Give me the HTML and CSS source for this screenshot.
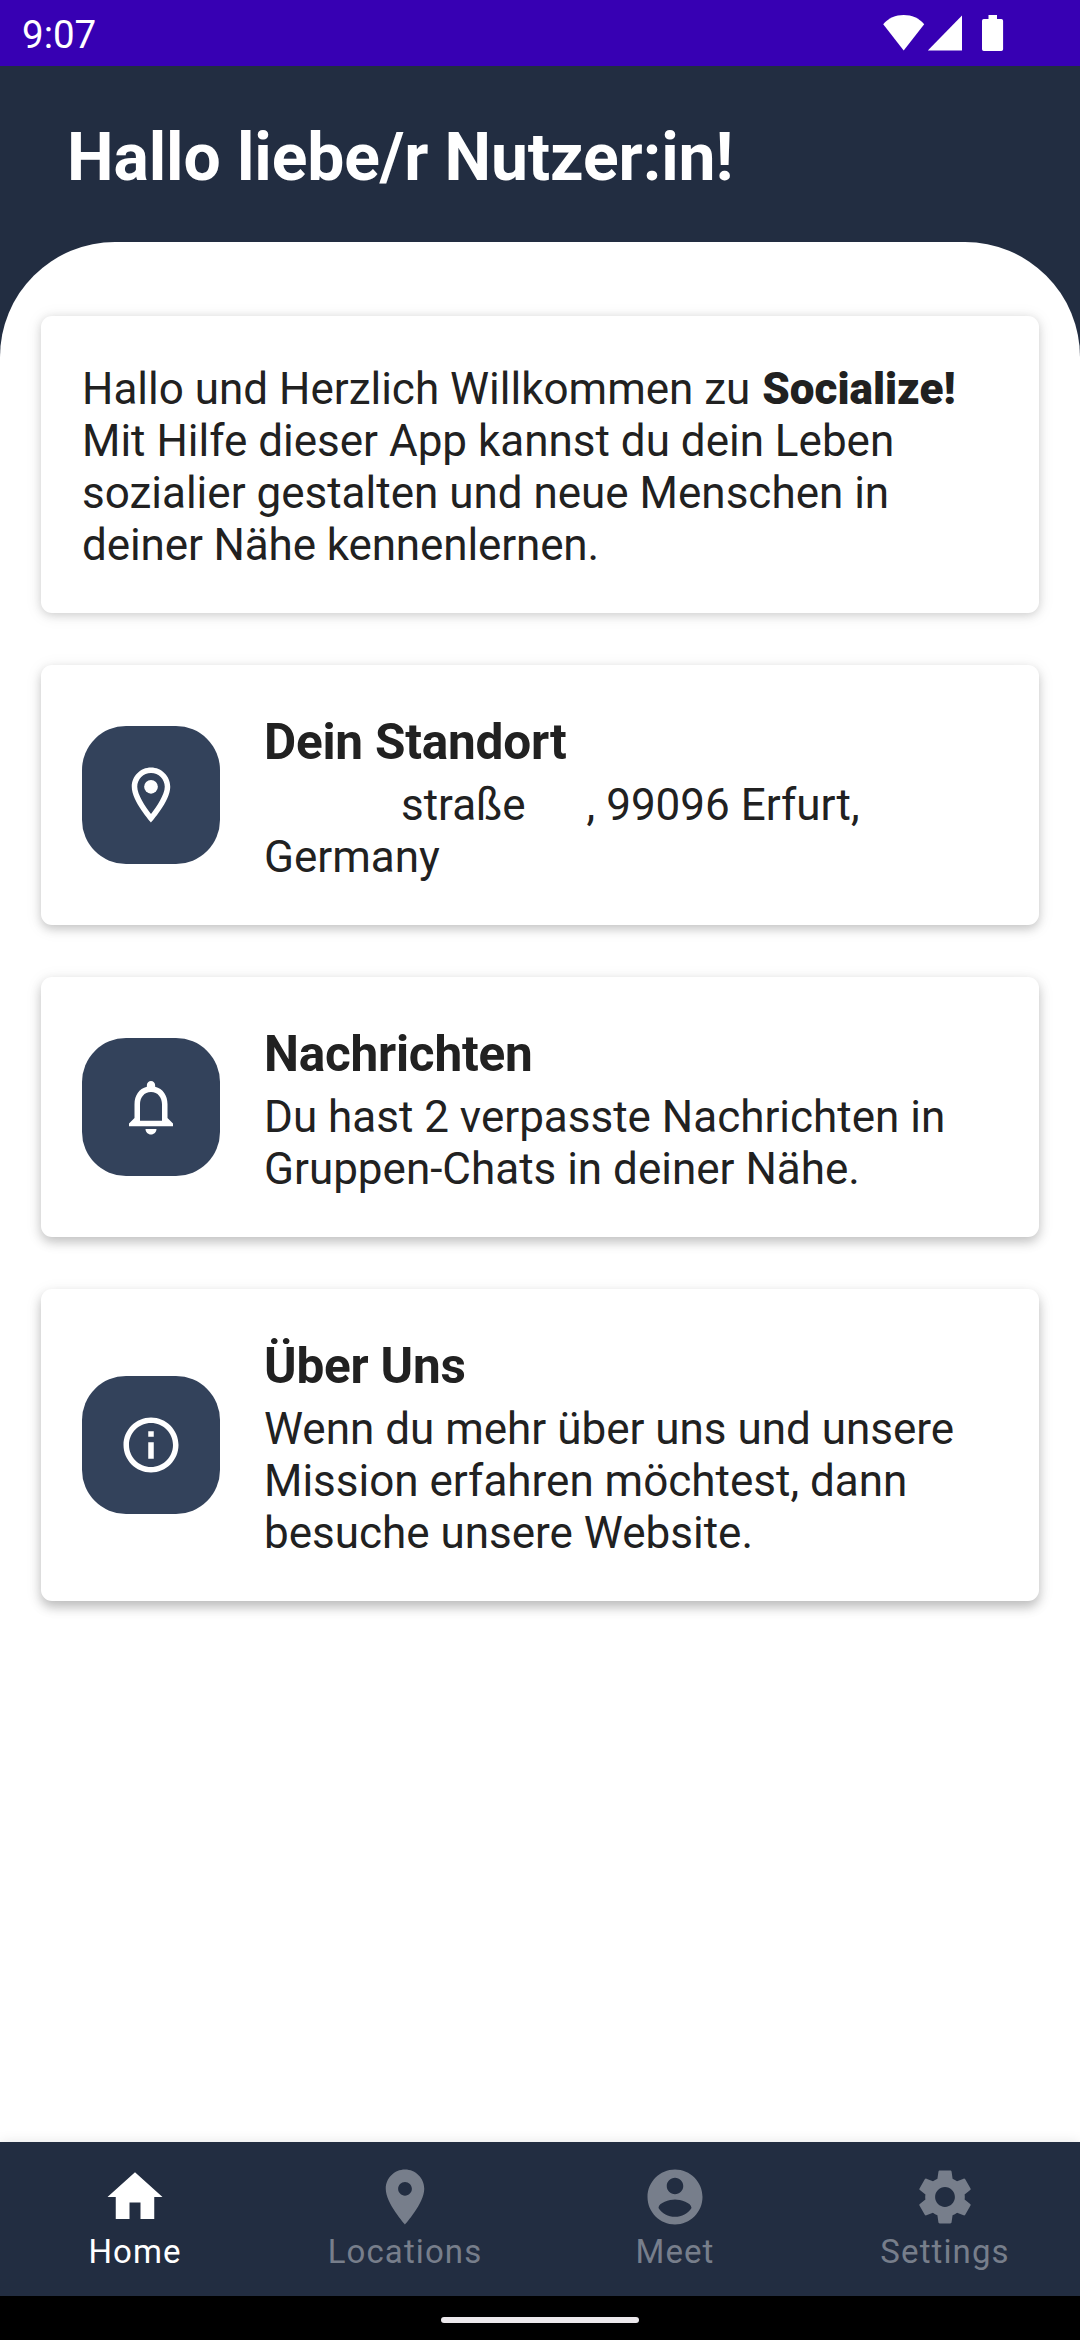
FILE: index.html
```html
<!DOCTYPE html>
<html lang="de">
<head>
<meta charset="utf-8">
<title>Socialize</title>
<link rel="stylesheet" href="styles.css">
</head>
<body>
<div class="app">
  <div class="status">
    <span class="time">9:07</span>
    <svg class="status-icons" width="122" height="38" viewBox="0 0 122 38" fill="#fff">
      <path d="M0.2 10.3C5.500 4 12.500 1 20.700 1S35.900 4 41.200 10.300L20.700 36.500z"/>
      <path d="M79 1.500V36.500H44.800z"/>
      <path d="M105.500 1h8.500v4h4.300a1.800 1.800 0 0 1 1.800 1.800v28.400a1.800 1.800 0 0 1-1.800 1.800h-17.500a1.800 1.800 0 0 1-1.800-1.800V6.800a1.800 1.800 0 0 1 1.800-1.800h4.700z"/>
    </svg>
  </div>
  <header class="header"><h1>Hallo liebe/r Nutzer:in!</h1></header>
  <main class="content">
    <section class="card card-intro">
      <p>Hallo und Herzlich Willkommen zu <b>Socialize!</b><br>Mit Hilfe dieser App kannst du dein Leben<br>sozialier gestalten und neue Menschen in<br><span class="last-line">deiner Nähe kennenlernen.</span></p>
    </section>
    <section class="card card-location">
      <div class="tile"><svg viewBox="0 0 24 24"><path d="M12 2C8.130 2 5 5.130 5 9c0 5.250 7 13 7 13s7-7.750 7-13c0-3.870-3.130-7-7-7zM7 9c0-2.760 2.240-5 5-5s5 2.240 5 5c0 2.880-2.880 7.190-5 9.880C9.920 16.210 7 11.850 7 9z"/><circle cx="12" cy="9" r="2.5"/></svg></div>
      <div class="text">
        <h2>Dein Standort</h2>
        <p><span class="gap-street"></span>straße<span class="gap-number"></span>, 99096 Erfurt,<br>Germany</p>
      </div>
    </section>
    <section class="card card-messages">
      <div class="tile"><svg viewBox="0 0 24 24"><path d="M12 22c1.100 0 2-.9 2-2h-4c0 1.100.9 2 2 2zm6-6v-5c0-3.070-1.630-5.640-4.500-6.320V4c0-.83-.67-1.500-1.500-1.500s-1.500.67-1.500 1.500v.68C7.640 5.360 6 7.920 6 11v5l-2 2v1h16v-1l-2-2zm-2 1H8v-6c0-2.480 1.510-4.500 4-4.500s4 2.020 4 4.500v6z"/></svg></div>
      <div class="text">
        <h2>Nachrichten</h2>
        <p>Du hast 2 verpasste Nachrichten in<br>Gruppen-Chats in deiner Nähe.</p>
      </div>
    </section>
    <section class="card card-about">
      <div class="tile"><svg viewBox="0 0 24 24"><path d="M11 7h2v2h-2zm0 4h2v6h-2zm1-9C6.480 2 2 6.480 2 12s4.480 10 10 10 10-4.480 10-10S17.520 2 12 2zm0 18c-4.410 0-8-3.590-8-8s3.590-8 8-8 8 3.590 8 8-3.590 8-8 8z"/></svg></div>
      <div class="text">
        <h2>Über Uns</h2>
        <p>Wenn du mehr über uns und unsere<br>Mission erfahren möchtest, dann<br>besuche unsere Website.</p>
      </div>
    </section>
  </main>
  <nav class="nav">
    <a class="nav-item active"><svg viewBox="0 0 24 24"><path d="M10 20v-6h4v6h5v-8h3L12 3 2 12h3v8z"/></svg><span>Home</span></a>
    <a class="nav-item"><svg viewBox="0 0 24 24"><path d="M12 2C8.130 2 5 5.130 5 9c0 5.250 7 13 7 13s7-7.750 7-13c0-3.870-3.130-7-7-7zm0 9.500c-1.380 0-2.500-1.120-2.500-2.500s1.120-2.500 2.500-2.500 2.500 1.120 2.500 2.500-1.120 2.500-2.500 2.500z"/></svg><span>Locations</span></a>
    <a class="nav-item"><svg viewBox="0 0 24 24"><path d="M12 2C6.480 2 2 6.480 2 12s4.480 10 10 10 10-4.480 10-10S17.520 2 12 2zm0 3c1.660 0 3 1.340 3 3s-1.340 3-3 3-3-1.340-3-3 1.340-3 3-3zm0 14.200c-2.500 0-4.710-1.280-6-3.220.03-1.990 4-3.080 6-3.080 1.990 0 5.970 1.090 6 3.080-1.290 1.940-3.500 3.220-6 3.220z"/></svg><span>Meet</span></a>
    <a class="nav-item"><svg viewBox="0 0 24 24"><path d="M19.140 12.940c.04-.3.06-.61.06-.94 0-.32-.02-.64-.07-.94l2.030-1.580c.18-.14.23-.41.12-.61l-1.920-3.320c-.12-.22-.37-.29-.59-.22l-2.390.96c-.5-.38-1.030-.7-1.620-.94l-.36-2.540c-.04-.24-.24-.41-.48-.41h-3.840c-.24 0-.43.17-.47.41l-.36 2.540c-.59.24-1.130.57-1.620.94l-2.390-.96c-.22-.08-.47 0-.59.22L2.740 8.870c-.12.21-.08.47.12.61l2.030 1.580c-.05.3-.09.63-.09.94s.02.64.07.94l-2.030 1.580c-.18.14-.23.41-.12.61l1.920 3.320c.12.22.37.29.59.22l2.390-.96c.5.38 1.030.7 1.620.94l.36 2.540c.05.24.24.41.48.41h3.840c.24 0 .44-.17.47-.41l.36-2.540c.59-.24 1.130-.56 1.620-.94l2.390.96c.22.08.47 0 .59-.22l1.920-3.320c.12-.22.07-.47-.12-.61l-2.010-1.580zM12 15.600c-1.980 0-3.600-1.620-3.600-3.600s1.620-3.600 3.600-3.600 3.600 1.620 3.600 3.600-1.620 3.600-3.600 3.600z"/></svg><span>Settings</span></a>
  </nav>
  <div class="gesture"><div class="pill"></div></div>
</div>
</body>
</html>
```
FILE: styles.css
```css
* { box-sizing: border-box; }
body, h1, h2, p { margin: 0; }
body { font-family: Roboto, sans-serif; color: #212121; background: #222d41; }
.app { width: 1080px; height: 2340px; display: flex; flex-direction: column; overflow: hidden; }
.status { height: 66px; flex: none; background: #3700b3; color: #fff; display: flex; justify-content: space-between; align-items: flex-start; padding: 14px 75px 0 22px; }
.time { font-size: 38.5px; line-height: 42px; }
.header { height: 176px; flex: none; padding: 53px 67px 0; color: #fff; }
.header h1 { font-size: 66px; line-height: 78px; font-weight: 700; letter-spacing: -0.1px; }
.content { flex: 1; background: #fff; border-radius: 115px 115px 0 0; padding: 74px 41px 0; display: flex; flex-direction: column; gap: 52px; }
.card { flex: none; display: flex; align-items: center; gap: 44px; padding: 0 41px; border-radius: 11px; background: #fff; }
.card p { font-size: 44px; line-height: 52px; white-space: nowrap; }
.card h2 { font-size: 49.5px; line-height: 58px; font-weight: 700; margin-bottom: 8px; letter-spacing: -0.22px; }
.card-intro { height: 297px; padding-top: 5px; box-shadow: 0 2px 10px rgba(0,0,0,.15), 0 2px 18px rgba(0,0,0,.08); }
.card-location { height: 260px; box-shadow: 0 4px 10px rgba(0,0,0,.18), 0 3px 18px rgba(0,0,0,.08); }
.card-messages { height: 260px; box-shadow: 0 5px 11px rgba(0,0,0,.2), 0 3px 18px rgba(0,0,0,.08); }
.card-about { height: 312px; box-shadow: 0 6px 11px rgba(0,0,0,.22), 0 4px 18px rgba(0,0,0,.08); }
.card-intro b { font-weight: 900; margin-left: 1px; }
.last-line { letter-spacing: -0.12px; }
.text { padding-top: 6px; }
.tile { width: 138px; height: 138px; flex: none; border-radius: 44px; background: #33425b; display: flex; align-items: center; justify-content: center; }
.tile svg { width: 66px; height: 66px; fill: #fff; }
.gap-street { display: inline-block; width: 137px; }
.gap-number { display: inline-block; width: 61px; }
.nav { height: 154px; flex: none; background: #222d41; display: grid; grid-template-columns: repeat(4, 1fr); box-shadow: 0 0 12px rgba(0,0,0,.1); }
.nav-item { display: flex; flex-direction: column; align-items: center; padding-top: 22px; color: #777e8b; fill: #777e8b; font-size: 33px; line-height: 39px; letter-spacing: 1.1px; }
.nav-item svg { width: 66px; height: 66px; margin-bottom: 2px; }
.nav-item.active { color: #fff; fill: #fff; }
.gesture { height: 44px; flex: none; background: #000; display: flex; justify-content: center; padding-top: 21px; }
.pill { width: 198px; height: 6px; border-radius: 3px; background: #ebe8ec; }
```
